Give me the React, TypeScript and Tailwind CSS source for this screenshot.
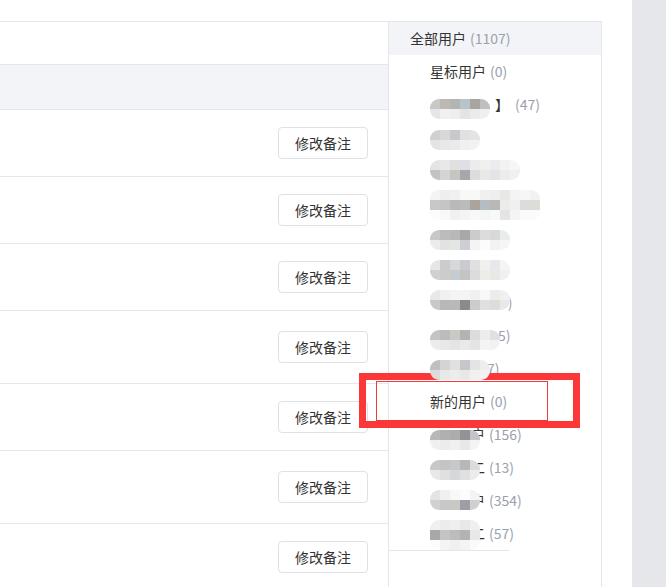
import React from "react";

type Blob = {
  mt: string;
  rows: string[][];
  cover?: string;
  tail?: string;
  tailDark?: string;
  tailClass?: string;
  tailGap?: string;
};

const FONT = "font-['Microsoft_YaHei','Noto_Sans_CJK_SC',sans-serif]";

const tableRows = ["h-[67px]", "h-[67px]", "h-[67px]", "h-[73px]", "h-[67px]", "h-[73px]", "h-[67px]"];

const groups: (Blob | { name: string; count: string })[] = [
  { name: "星标用户", count: "(0)" },
  {
    mt: "mt-[11px]",
    rows: [
      ["#c8c8c8", "#bcb8b2", "#b3b6b0", "#b8c4c8", "#a8a4a0", "#c0bfbf"],
      ["#e6e6e6", "#f0f0f0", "#eeeeee", "#e4e4e6", "#ebebeb", "#efefef"],
    ],
    tailDark: "】",
    tail: "(47)",
    tailClass: "ml-[6px]",
    tailGap: "ml-[5px]",
  },
  {
    mt: "mt-[9px]",
    rows: [
      ["#d0d0d0", "#d8d8d8", "#c8c8cc", "#e0e0e0", "#e4e4e4"],
      ["#e4e4e4", "#e8e8e8", "#e8eaec", "#f0f0f0", "#f2f2f2"],
    ],
  },
  {
    mt: "mt-[6px]",
    rows: [
      ["#e4e4e4", "#e8e8e8", "#e0e0e0", "#e0e0e2", "#ececec", "#f0f0f0", "#ececee", "#f2f2f2", "#f6f6f6"],
      ["#c4c2c2", "#d4d4d2", "#c8c4c0", "#a4a8ac", "#dcdcdc", "#e8e8e6", "#e4e4e6", "#ececec", "#f0f0f0"],
    ],
  },
  {
    mt: "mt-[3px]",
    rows: [
      ["#f4f4f4", "#eeeeee", "#f0f0f0", "#f8f8f8", "#f8f8f6", "#f0f0f0", "#eeeeee", "#e8e8e6", "#f4f4f4", "#f6f6f6", "#f2f2f2"],
      ["#c8c8c8", "#c4c6c6", "#bcb8b8", "#b8bcbc", "#aca49c", "#b4bcc4", "#b8b8b8", "#ececea", "#f0f0f0", "#dcdcd8", "#dcdcd8"],
      ["#fcfcfc", "#f8f8f8", "#f0f0f0", "#f4f4f4", "#f8f8f8", "#f4f6f6", "#f8f8f8", "#e4e4e4", "#f4f4f4", "#fafafa", "#fafafa"],
    ],
  },
  {
    mt: "mt-[10px]",
    rows: [
      ["#c8c8c8", "#bcbcbc", "#b8b8b8", "#a8a8ac", "#cccccc", "#dcdcdc", "#d8d8d8", "#e8ecec"],
      ["#ececec", "#e4e2e0", "#e4e6e6", "#ccd0d4", "#f4f4f4", "#fcfcfc", "#f2f2f2", "#f6f6f6"],
    ],
  },
  {
    mt: "mt-[7px]",
    rows: [
      ["#e6e6e8", "#cccccc", "#d8d8d8", "#c8ccd0", "#e0e0e0", "#f0f0f0", "#e8e8ec", "#f4f4f4"],
      ["#d0d0d0", "#ccccc8", "#c4ccd0", "#c4c4c0", "#dcdcdc", "#ecece8", "#e8e8e8", "#f0f0f0"],
    ],
  },
  {
    mt: "mt-[4px]",
    rows: [
      ["#e8e8e8", "#f0f0f0", "#f4f4f4", "#f4f4f4", "#f0f0f0", "#f8f8f8", "#ececec", "#f0f0f0"],
      ["#c8c8c8", "#b8b8b8", "#bcb8b4", "#888c90", "#cccccc", "#e0e0e0", "#dcdcdc", "#e8e8e8"],
    ],
    cover: "mr-[-10px]",
    tail: "6)",
  },
  {
    mt: "mt-[11px]",
    rows: [
      ["#c4c4c4", "#bcbcbc", "#ccc8c4", "#b0b4b4", "#dcdcdc", "#ececec", "#e0e0e4"],
      ["#ececec", "#e8e8e8", "#e4e4e4", "#e8eaea", "#e4e4e4", "#f4f4f4", "#f0f2f4"],
    ],
    cover: "mr-[-2px]",
    tail: "5)",
  },
  {
    mt: "mt-[8px]",
    rows: [
      ["#c0c0c0", "#d4d4d4", "#e0e0e0", "#c4c8cc", "#e4e4e4", "#eeeeee"],
      ["#dcdcdc", "#e8e8e8", "#ececec", "#e8e8e8", "#f0f0f0", "#f2f2f2"],
    ],
    cover: "mr-[-3px]",
    tail: "7)",
  },
  { name: "新的用户", count: "(0)" },
  {
    mt: "mt-[12px]",
    rows: [
      ["#b8b8b8", "#b0b0b0", "#acacac", "#909498", "#c4c4c8"],
      ["#f0f0f0", "#ececec", "#f0f0f0", "#e8e8e8", "#f4f4f4"],
    ],
    cover: "mr-[-9px]",
    tailDark: "户",
    tail: "(156)",
  },
  {
    mt: "mt-[9px]",
    rows: [
      ["#c8c8c8", "#c4c4c4", "#c8c8c8", "#b4b8bc", "#dcdcdc"],
      ["#e8e8e8", "#e0e0e0", "#d4d8dc", "#e0e0e0", "#ececec"],
    ],
    cover: "mr-[-9px]",
    tailDark: "二",
    tail: "(13)",
  },
  {
    mt: "mt-[6px]",
    rows: [
      ["#e4e4e4", "#f0f0f0", "#f8f8f8", "#fcfcfc", "#f4f4f4"],
      ["#d0d0d0", "#c8c8c8", "#c8c8c4", "#9ca0a4", "#d0d0d0"],
    ],
    cover: "mr-[-9px]",
    tailDark: "户",
    tail: "(354)",
  },
  {
    mt: "mt-[3px]",
    rows: [
      ["#f0f0f0", "#ececec", "#eeeeee", "#e8e8e8", "#f0f0f0"],
      ["#a8a8a8", "#c4c4c4", "#bcbcbc", "#b0b4b4", "#e8e8e8"],
      ["#fcfcfc", "#f4f4f4", "#f0f0f0", "#f4f4f4", "#fafafa"],
    ],
    cover: "mr-[-9px]",
    tailDark: "二",
    tail: "(57)",
  },
];

function Mosaic({ blob }: { blob: Blob }) {
  return (
    <div className={`self-start ${blob.mt} ${blob.cover ?? ""} relative z-10 rounded-[9px] overflow-hidden blur-[0.4px] flex flex-col`}>
      {blob.rows.map((row, i) => (
        <div key={i} className="flex">
          {row.map((c, j) => (
            <div key={j} className="w-[10px] h-[10px]" style={{ backgroundColor: c }} />
          ))}
        </div>
      ))}
    </div>
  );
}

export default function App() {
  return (
    <div className={`relative w-[666px] h-[587px] overflow-hidden bg-white flex ${FONT} text-[14px] text-[#333]`}>
      <div className="w-[632px] pt-[21px]">
        <div className="w-[602px] h-full border-t border-[#e4e6eb] flex">
          {/* table */}
          <div className="w-[388px] flex flex-col overflow-hidden">
            <div className="h-[42px] shrink-0" />
            <div className="h-[46px] shrink-0 border-y border-[#e4e6eb] bg-[#f3f4f8]" />
            {tableRows.map((h, i) => (
              <div key={i} className={`${h} shrink-0 border-b border-[#e6e7eb] flex items-center justify-end pr-[20px]`}>
                <button className="w-[90px] h-[32px] border border-[#dfe1e6] rounded-[4px] bg-white text-[14px] text-[#333]">
                  修改备注
                </button>
              </div>
            ))}
          </div>
          {/* groups */}
          <div className="w-[214px] border-x border-[#e4e6eb] flex flex-col">
            <div className="h-[33px] shrink-0 bg-[#f3f4f8] flex items-center pl-[21px]">
              全部用户 <span className="ml-[4px] text-[#9aa1ad]">(1107)</span>
            </div>
            {groups.map((g, i) =>
              "name" in g ? (
                <div key={i} className="h-[33px] shrink-0 flex items-center pl-[41px]">
                  {g.name} <span className="ml-[4px] text-[#9aa1ad]">{g.count}</span>
                </div>
              ) : (
                <div key={i} className="h-[33px] shrink-0 flex items-center pl-[41px]">
                  <Mosaic blob={g} />
                  {g.tailDark && <span className={g.tailGap}>{g.tailDark}</span>}
                  {g.tail && (
                    <span className={`${g.tailClass ?? (g.tailDark ? "ml-[4px]" : "")} text-[#9aa1ad]`}>{g.tail}</span>
                  )}
                </div>
              )
            )}
            <div className="w-[120px] h-px shrink-0 bg-[#e4e6eb]" />
          </div>
        </div>
      </div>
      <div className="w-[34px] h-full bg-[#e6e7eb]" />

      {/* annotation */}
      <div className="absolute left-[359px] top-[373px] w-[221px] h-[55px] border-[7px] border-[#fb3737]" />
      <div className="absolute left-[376px] top-[381px] w-[172px] h-[40px] border border-[#f23a3a]" />
    </div>
  );
}
